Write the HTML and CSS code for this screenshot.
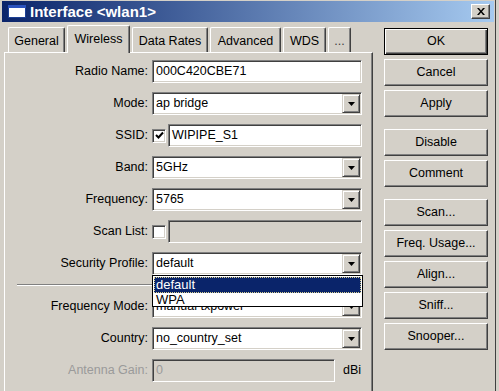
FILE: index.html
```html
<!DOCTYPE html>
<html>
<head>
<meta charset="utf-8">
<title>Interface &lt;wlan1&gt;</title>
<link rel="stylesheet" href="styles.css">
</head>
<body>
<div class="window">
  <div class="titlebar">
    <svg class="appicon" width="18" height="13" viewBox="0 0 18 13">
      <rect x="0.5" y="0.5" width="17" height="12" fill="#ffffff" stroke="#1c3f94"/>
      <rect x="0" y="0" width="18" height="3" fill="#2a52be"/>
    </svg>
    <span class="title">Interface &lt;wlan1&gt;</span>
    <div class="closebtn">
      <svg width="8" height="7" viewBox="0 0 8 7"><path d="M0 0H2L4 2.4L6 0H8L5 3.5L8 7H6L4 4.6L2 7H0L3 3.5Z" fill="#000"/></svg>
    </div>
  </div>
  <div class="main">
    <div class="left">
      <div class="tabs">
        <div class="tab w-general">General</div>
        <div class="tab active w-wireless">Wireless</div>
        <div class="tab w-rates">Data Rates</div>
        <div class="tab w-adv">Advanced</div>
        <div class="tab w-wds">WDS</div>
        <div class="tab w-more">...</div>
      </div>
      <div class="panel">
        <div class="row">
          <span class="lbl">Radio Name:</span>
          <div class="field"><span class="val">000C420CBE71</span></div>
        </div>
        <div class="row">
          <span class="lbl">Mode:</span>
          <div class="field select"><span class="val">ap bridge</span><span class="arrow"><svg width="7" height="4" viewBox="0 0 7 4"><path d="M0 0H7L3.5 4Z" fill="#000"/></svg></span></div>
        </div>
        <div class="row">
          <span class="lbl">SSID:</span>
          <span class="cb"><svg width="9" height="9" viewBox="0 0 9 9"><polyline points="1,4 3.5,6.5 8,1.5" fill="none" stroke="#000" stroke-width="2"/></svg></span>
          <div class="field short"><span class="val">WIPIPE_S1</span></div>
        </div>
        <div class="row">
          <span class="lbl">Band:</span>
          <div class="field select"><span class="val">5GHz</span><span class="arrow"><svg width="7" height="4" viewBox="0 0 7 4"><path d="M0 0H7L3.5 4Z" fill="#000"/></svg></span></div>
        </div>
        <div class="row">
          <span class="lbl">Frequency:</span>
          <div class="field select"><span class="val">5765</span><span class="arrow"><svg width="7" height="4" viewBox="0 0 7 4"><path d="M0 0H7L3.5 4Z" fill="#000"/></svg></span></div>
        </div>
        <div class="row">
          <span class="lbl">Scan List:</span>
          <span class="cb"></span>
          <div class="field short disabled"></div>
        </div>
        <div class="row">
          <span class="lbl">Security Profile:</span>
          <div class="field select"><span class="val">default</span><span class="arrow"><svg width="7" height="4" viewBox="0 0 7 4"><path d="M0 0H7L3.5 4Z" fill="#000"/></svg></span>
            <div class="popup">
              <div class="opt sel">default</div>
              <div class="opt">WPA</div>
            </div>
          </div>
        </div>
        <div class="sep"></div>
        <div class="row">
          <span class="lbl">Frequency Mode:</span>
          <div class="field select"><span class="val">manual txpower</span><span class="arrow"><svg width="7" height="4" viewBox="0 0 7 4"><path d="M0 0H7L3.5 4Z" fill="#000"/></svg></span></div>
        </div>
        <div class="row">
          <span class="lbl">Country:</span>
          <div class="field select"><span class="val">no_country_set</span><span class="arrow"><svg width="7" height="4" viewBox="0 0 7 4"><path d="M0 0H7L3.5 4Z" fill="#000"/></svg></span></div>
        </div>
        <div class="row">
          <span class="lbl grey">Antenna Gain:</span>
          <div class="field gain disabled"><span class="val grey">0</span></div>
          <span class="unit">dBi</span>
        </div>
      </div>
    </div>
    <div class="buttons">
      <div class="btn default">OK</div>
      <div class="btn">Cancel</div>
      <div class="btn">Apply</div>
      <div class="btn group">Disable</div>
      <div class="btn">Comment</div>
      <div class="btn group">Scan...</div>
      <div class="btn">Freq. Usage...</div>
      <div class="btn">Align...</div>
      <div class="btn">Sniff...</div>
      <div class="btn">Snooper...</div>
    </div>
  </div>
</div>
</body>
</html>
```
FILE: styles.css
```css
* { box-sizing: border-box; }
html, body { margin: 0; padding: 0; }
body {
  background: #d4d0c8;
  font-family: "Liberation Sans", Arial, sans-serif;
  font-size: 12.5px;
  color: #000;
  width: 499px;
  height: 391px;
  overflow: hidden;
}
.window {
  width: 496px;
  height: 391px;
  border-right: 1px solid #404040;
  padding: 1px 1px 0 2px;
}
.titlebar {
  height: 21px;
  background: linear-gradient(to right, #0a246a, #a6caf0);
  display: flex;
  align-items: center;
  padding: 0 4px 0 6px;
}
.appicon { display: block; margin-right: 4px; }
.title {
  color: #fff;
  font-weight: bold;
  font-size: 15px;
}
.closebtn {
  margin-left: auto;
  width: 19px;
  height: 15px;
  background: #d4d0c8;
  border: 1px solid;
  border-color: #fff #404040 #404040 #fff;
  box-shadow: inset -1px -1px #808080;
  display: flex;
  align-items: center;
  justify-content: center;
}
.closebtn svg { display: block; }
.main {
  display: flex;
  margin-top: 3px;
}
.left {
  margin-left: 2px;
  width: 369px;
}
.tabs {
  height: 27px;
  display: flex;
  align-items: flex-end;
  gap: 2px;
  padding-left: 4px;
}
.tab {
  height: 25px;
  border-top: 1px solid #fff;
  border-left: 1px solid #fff;
  border-right: 1px solid #404040;
  box-shadow: inset -1px 0 #808080;
  border-radius: 2px 2px 0 0;
  display: flex;
  align-items: center;
  justify-content: center;
  padding-top: 1px;
}
.tab.active {
  height: 28px;
  margin-bottom: -1px;
  position: relative;
  z-index: 1;
  background: #d4d0c8;
  padding-bottom: 3px;
}
.w-general { width: 57px; }
.w-wireless { width: 63px; }
.w-rates { width: 76px; }
.w-adv { width: 71px; }
.w-wds { width: 43px; }
.w-more { width: 23px; color: #404040; }
.panel {
  height: 340px;
  border-top: 1px solid #fff;
  border-left: 1px solid #fff;
  border-right: 1px solid #404040;
  box-shadow: inset -1px 0 #808080;
  padding-top: 7px;
}
.row {
  display: flex;
  align-items: center;
  height: 23px;
  margin-bottom: 9px;
}
.lbl {
  width: 143px;
  text-align: right;
  margin-right: 4px;
  padding-bottom: 2px;
  white-space: nowrap;
}
.lbl.grey, .val.grey { color: #9a9a9a; }
.field {
  position: relative;
  width: 210px;
  height: 23px;
  background: #fff;
  border: 1px solid;
  border-color: #808080 #fff #fff #808080;
  box-shadow: inset 1px 1px #404040, inset -1px -1px #d4d0c8;
  padding: 1px 1px 1px 3px;
  display: flex;
  align-items: center;
}
.field.short { width: 194px; }
.field.gain { width: 183px; }
.field.disabled { background: #d4d0c8; }
.val {
  flex: 1;
  white-space: nowrap;
  padding-bottom: 2px;
}
.arrow {
  width: 18px;
  height: 19px;
  background: #d4d0c8;
  border: 1px solid;
  border-color: #d4d0c8 #404040 #404040 #d4d0c8;
  box-shadow: inset 1px 1px #fff, inset -1px -1px #808080;
  display: flex;
  align-items: center;
  justify-content: center;
}
.arrow svg { display: block; }
.cb {
  width: 14px;
  height: 14px;
  background: #fff;
  border: 1px solid;
  border-color: #808080 #fff #fff #808080;
  box-shadow: inset 1px 1px #404040, inset -1px -1px #d4d0c8;
  margin-right: 2px;
  display: flex;
  align-items: center;
  justify-content: center;
}
.cb svg { display: block; }
.unit { margin-left: 8px; padding-bottom: 2px; }
.sep {
  width: 345px;
  height: 2px;
  margin: 1px 0 9px 12px;
  border-top: 1px solid #808080;
  border-bottom: 1px solid #fff;
}
.popup {
  position: absolute;
  left: -1px;
  top: 22px;
  width: 211px;
  height: 32px;
  background: #fff;
  border: 1px solid #000;
  padding: 1px 1px 0 1px;
  z-index: 5;
}
.opt {
  height: 14px;
  padding-left: 2px;
  line-height: 13px;
  font-size: 13px;
}
.opt.sel {
  height: 16px;
  line-height: 15px;
  background: #0a246a;
  color: #fff;
  outline: 1px dotted #d8d090;
  outline-offset: -1px;
}
.buttons {
  margin-left: 11px;
  margin-top: 3px;
  width: 104px;
  display: flex;
  flex-direction: column;
  gap: 4px;
}
.btn {
  height: 27px;
  border: 1px solid;
  border-color: #fff #404040 #404040 #fff;
  box-shadow: inset -1px -1px #808080;
  display: flex;
  align-items: center;
  justify-content: center;
  padding-bottom: 1px;
}
.btn.default {
  height: 27px;
  border: 1px solid #000;
  box-shadow: inset 1px 1px #fff, inset -1px -1px #404040, inset -2px -2px #808080;
}
.btn.group { margin-top: 8px; }
```
